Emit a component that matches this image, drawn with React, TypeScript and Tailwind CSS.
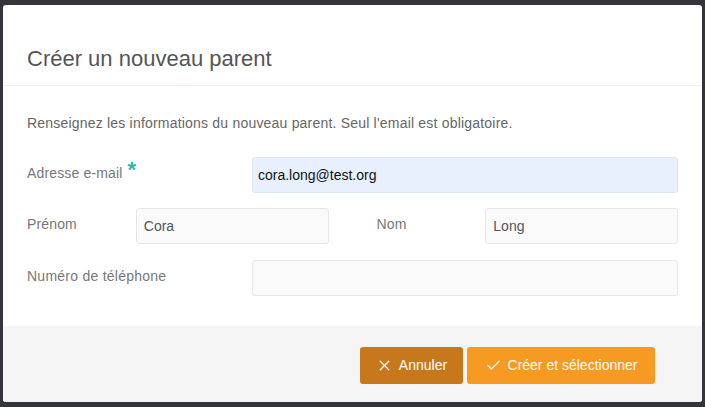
import { X, Check } from "lucide-react";

const font = { fontFamily: '"Liberation Sans", Arial, Helvetica, sans-serif' };

function Field({ value, className }: { value?: string; className: string }) {
  return (
    <div
      className={`h-[36px] rounded-[3px] border border-[#e6e6e6] bg-[#fafafa] px-[7px] flex items-center text-[14px] text-[#555] ${className}`}
    >
      {value}
    </div>
  );
}

export default function App() {
  return (
    <div className="w-[705px] h-[407px] bg-[#33343c] pt-[5px] pl-[3px]" style={font}>
      <div className="w-[699px] h-[397px] bg-white rounded-[3px] overflow-hidden flex flex-col">
        {/* header */}
        <div className="h-[81px] shrink-0 border-b border-[#f1f1f1] px-6 flex items-end pb-[11px]">
          <h2 className="text-[22px] leading-[30px] text-[#555]">Créer un nouveau parent</h2>
        </div>

        {/* body */}
        <div className="h-[240px] shrink-0 px-6 pt-[27px]">
          <p className="text-[14px] leading-[20px] text-[#666] tracking-[0.2px]">
            Renseignez les informations du nouveau parent. Seul l'email est obligatoire.
          </p>

          <div className="mt-[24px] flex items-center">
            <label className="w-[225px] text-[14px] text-[#777] -mt-[4px] flex items-start tracking-[0.15px]">
              Adresse e-mail
              <span className="ml-[5px] text-[22px] leading-[14px] font-bold text-[#2fb5b2]">*</span>
            </label>
            <div className="w-[426px] h-[36px] rounded-[3px] bg-[#e8f0fe] border border-[#dfe6f3] px-[5px] flex items-center text-[14px] text-[#111]">
              cora.long@test.org
            </div>
          </div>

          <div className="mt-[15px] flex items-center">
            <label className="w-[109px] text-[14px] text-[#777] -mt-[4px] tracking-[0.15px]">Prénom</label>
            <Field value="Cora" className="w-[193px]" />
            <label className="ml-[48px] w-[109px] text-[14px] text-[#777] -mt-[4px] tracking-[0.15px]">Nom</label>
            <Field value="Long" className="w-[193px]" />
          </div>

          <div className="mt-[16px] flex items-center">
            <label className="w-[225px] text-[14px] text-[#777] -mt-[4px] tracking-[0.25px]">Numéro de téléphone</label>
            <Field className="w-[426px] h-[35px]" />
          </div>
        </div>

        {/* footer */}
        <div className="flex-1 bg-[#f5f5f5] flex justify-end items-start pt-[21px] pr-[47px] gap-[4px]">
          <button className="h-[37px] w-[103px] rounded-[3px] bg-[#c7781b] text-white text-[14px] flex items-center justify-center gap-[6px]">
            <X size={17} strokeWidth={1.8} />
            Annuler
          </button>
          <button className="h-[37px] w-[188px] rounded-[3px] bg-[#f79a22] text-white text-[14px] flex items-center justify-center gap-[6px]">
            <Check size={17} strokeWidth={1.8} />
            Créer et sélectionner
          </button>
        </div>
      </div>
    </div>
  );
}
